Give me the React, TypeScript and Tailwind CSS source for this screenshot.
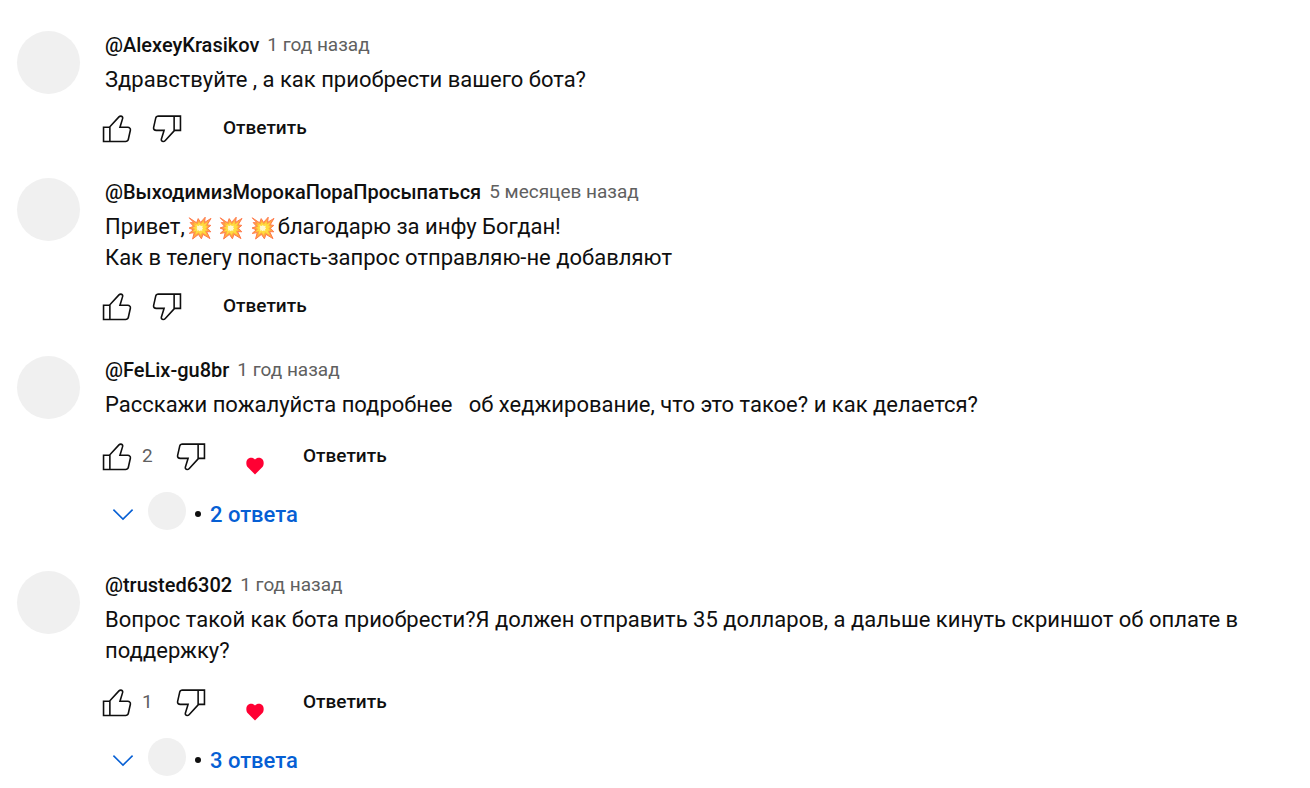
import React from "react";

interface Comment {
    id: number;
    author: string;
    time: string;
    body: React.ReactNode;
    likes?: number;
    hearted?: boolean;
    replies?: string;
}

const Boom = () => (
    <svg viewBox="0 0 24 24" role="img" aria-label="Взрыв" className="mx-px inline-block size-6 align-[-6px]">
        <path
            fill="#ffab3d"
            stroke="#ff7a4d"
            strokeWidth="1"
            strokeLinejoin="round"
            d="M1.200 1.800 8.600 6.800 10.200 2.600l2.400 3.800L17.200 1.200l-.6 5.200L23 2.400l-3.800 6.400 3.600.6-3.400 2.800 3.400 3.600-4.200-.2 3.400 7-7-4.200-1.600 4.400-3-4.400-5.800 4.600 1.600-6.400L1.200 17.400l4-3.600L1 12l4.600-1.600L2.200 6.600l3.800.2z"
        />
        <path fill="#ffdc3f" d="m4.800 5.400 4.800 3.200 1.300-2.700 1.900 2.600 2.900-3.200-.1 3.300 4-2.300-2.300 3.800 2.300.5-2.200 1.800 2 2.200-2.700.1 2 4.200-4.600-2.700-1.500 2.700-2-2.700-3.200 2.600.8-3.900-3.400.5 2.500-2.400-2.500-1.200 2.800-1.300-1.600-2 2.600.3z" />
        <path fill="#fff9d2" d="m8.600 9.600 2.200.4 1-.9 1 .9 2-.3-.6 1.700 1 1-1.100.8.2 1.600-1.700-.4-1.100.9-.9-1-1.600.4.3-1.600-.9-1 .9-.8z" />
    </svg>
);

const comments: Comment[] = [
    {
        id: 1,
        author: "@AlexeyKrasikov",
        time: "1 год назад",
        body: "Здравствуйте , а как приобрести вашего бота?",
    },
    {
        id: 2,
        author: "@ВыходимизМорокаПораПросыпаться",
        time: "5 месяцев назад",
        body: (
            <>
                Привет,
                <span className="mx-[2px]">
                    <Boom /> <Boom /> <Boom />
                </span>
                благодарю за инфу Богдан!
                <br />
                Как в телегу попасть-запрос отправляю-не добавляют
            </>
        ),
    },
    {
        id: 3,
        author: "@FeLix-gu8br",
        time: "1 год назад",
        body: "Расскажи пожалуйста подробнее   об хеджирование, что это такое? и как делается?",
        likes: 2,
        hearted: true,
        replies: "2 ответа",
    },
    {
        id: 4,
        author: "@trusted6302",
        time: "1 год назад",
        body: "Вопрос такой как бота приобрести?Я должен отправить 35 долларов, а дальше кинуть скриншот об оплате в поддержку?",
        likes: 1,
        hearted: true,
        replies: "3 ответа",
    },
];

const LikeIcon = () => (
    <svg viewBox="0 0 24 24" fill="currentColor" className="size-[38px]">
        <path d="M18.77,11h-4.23l1.52-4.94C16.38,5.03,15.54,4,14.38,4c-0.58,0-1.14,0.24-1.52,0.65L7,11H3v10h4h1h9.43c1.06,0,1.98-0.67,2.19-1.61l1.34-6C21.23,12.15,20.18,11,18.77,11z M7,20H4v-8h3V20z M19.98,13.17l-1.34,6C18.54,19.65,18.03,20,17.43,20H8v-8.61l5.6-6.06C13.79,5.12,14.08,5,14.38,5c0.26,0,0.5,0.11,0.63,0.3c0.07,0.1,0.15,0.26,0.09,0.47l-1.52,4.94L13.18,12h1.35h4.23c0.41,0,0.8,0.17,1.03,0.46C19.92,12.61,20.05,12.86,19.98,13.17z" />
    </svg>
);

const DislikeIcon = () => (
    <svg viewBox="0 0 24 24" fill="currentColor" className="size-[38px]">
        <path d="M17,4h-1H6.57C5.5,4,4.59,4.67,4.38,5.61l-1.34,6C2.77,12.85,3.82,14,5.23,14h4.23l-1.52,4.94C7.62,19.97,8.46,21,9.62,21c0.58,0,1.14-0.24,1.52-0.65L17,14h4V4H17z M10.4,19.67C10.21,19.88,9.92,20,9.62,20c-0.26,0-0.5-0.11-0.63-0.3c-0.07-0.1-0.15-0.26-0.09-0.47l1.52-4.94l0.4-1.29H9.46H5.23c-0.41,0-0.8-0.17-1.03-0.46c-0.12-0.15-0.25-0.4-0.18-0.72l1.34-6C5.46,5.35,5.97,5,6.57,5H16v8.61L10.4,19.67z M20,13h-3V5h3V13z" />
    </svg>
);

const HeartIcon = () => (
    <svg viewBox="0 0 18 18" fill="#ff0033" className="size-[18px]">
        <path d="M9 17.400 1.800 10.200C-.2 8 0 4.400 1.400 2.600 3 .4 7 .2 9 2.600c2-2.400 6-2.200 7.600 0 1.400 1.800 1.600 5.400-.4 7.600z" />
    </svg>
);

const ChevronIcon = () => (
    <svg viewBox="0 0 24 24" fill="currentColor" className="size-[38px]">
        <path d="m18.400 9.600-6.400 6.300-6.400-6.300.7-.7 5.700 5.600 5.700-5.600z" />
    </svg>
);

const CommentItem = ({ comment }: { comment: Comment }) => (
    <article className="flex gap-[25px]">
        <div className="size-[63px] shrink-0 rounded-full bg-[#f0f0f0]"></div>
        <div className="min-w-0 flex-1">
            <header className="flex h-[33px] gap-2 text-[20px] leading-7">
                <a href="#" className="font-medium">
                    {comment.author}
                </a>
                <span className="text-[19px] text-[#606060]">{comment.time}</span>
            </header>
            <p className="mb-2 text-[22px] leading-[31px] whitespace-pre-wrap">{comment.body}</p>
            <div className={comment.hearted ? "-ml-[7px] flex h-14 items-center" : "-ml-[7px] flex h-[50px] items-center"}>
                <button aria-label="Нравится">
                    <LikeIcon />
                </button>
                {comment.likes ? <span className="w-9 pl-[6px] text-[19px] leading-7 text-[#606060]">{comment.likes}</span> : <span className="w-3"></span>}
                <button aria-label="Не нравится">
                    <DislikeIcon />
                </button>
                {comment.hearted && (
                    <button aria-label="Отметка автора" className="flex size-14 items-end justify-end pr-[2px] pb-[9px]">
                        <HeartIcon />
                    </button>
                )}
                <button className="ml-[37px] text-[19px] leading-7 font-medium">Ответить</button>
            </div>
            {comment.replies && (
                <button className="mt-[2px] -ml-px mb-1 flex h-14 items-center text-[22px] font-medium text-[#065fd4]">
                    <ChevronIcon />
                    <span className="mb-[6px] ml-[6px] size-[38px] rounded-full bg-[#f0f0f0]"></span>
                    <span className="mx-[9px] size-[6px] rounded-full bg-[#0f0f0f]"></span>
                    {comment.replies}
                </button>
            )}
        </div>
    </article>
);

const App: React.FC = () => {
    return (
        <main className="flex flex-col gap-[25px] bg-white pt-[31px] pr-[60px] pl-[17px] font-[Roboto,'Noto_Sans',sans-serif] text-[#0f0f0f]">
            {comments.map((comment) => (
                <CommentItem key={comment.id} comment={comment} />
            ))}
        </main>
    );
};

export default App;
